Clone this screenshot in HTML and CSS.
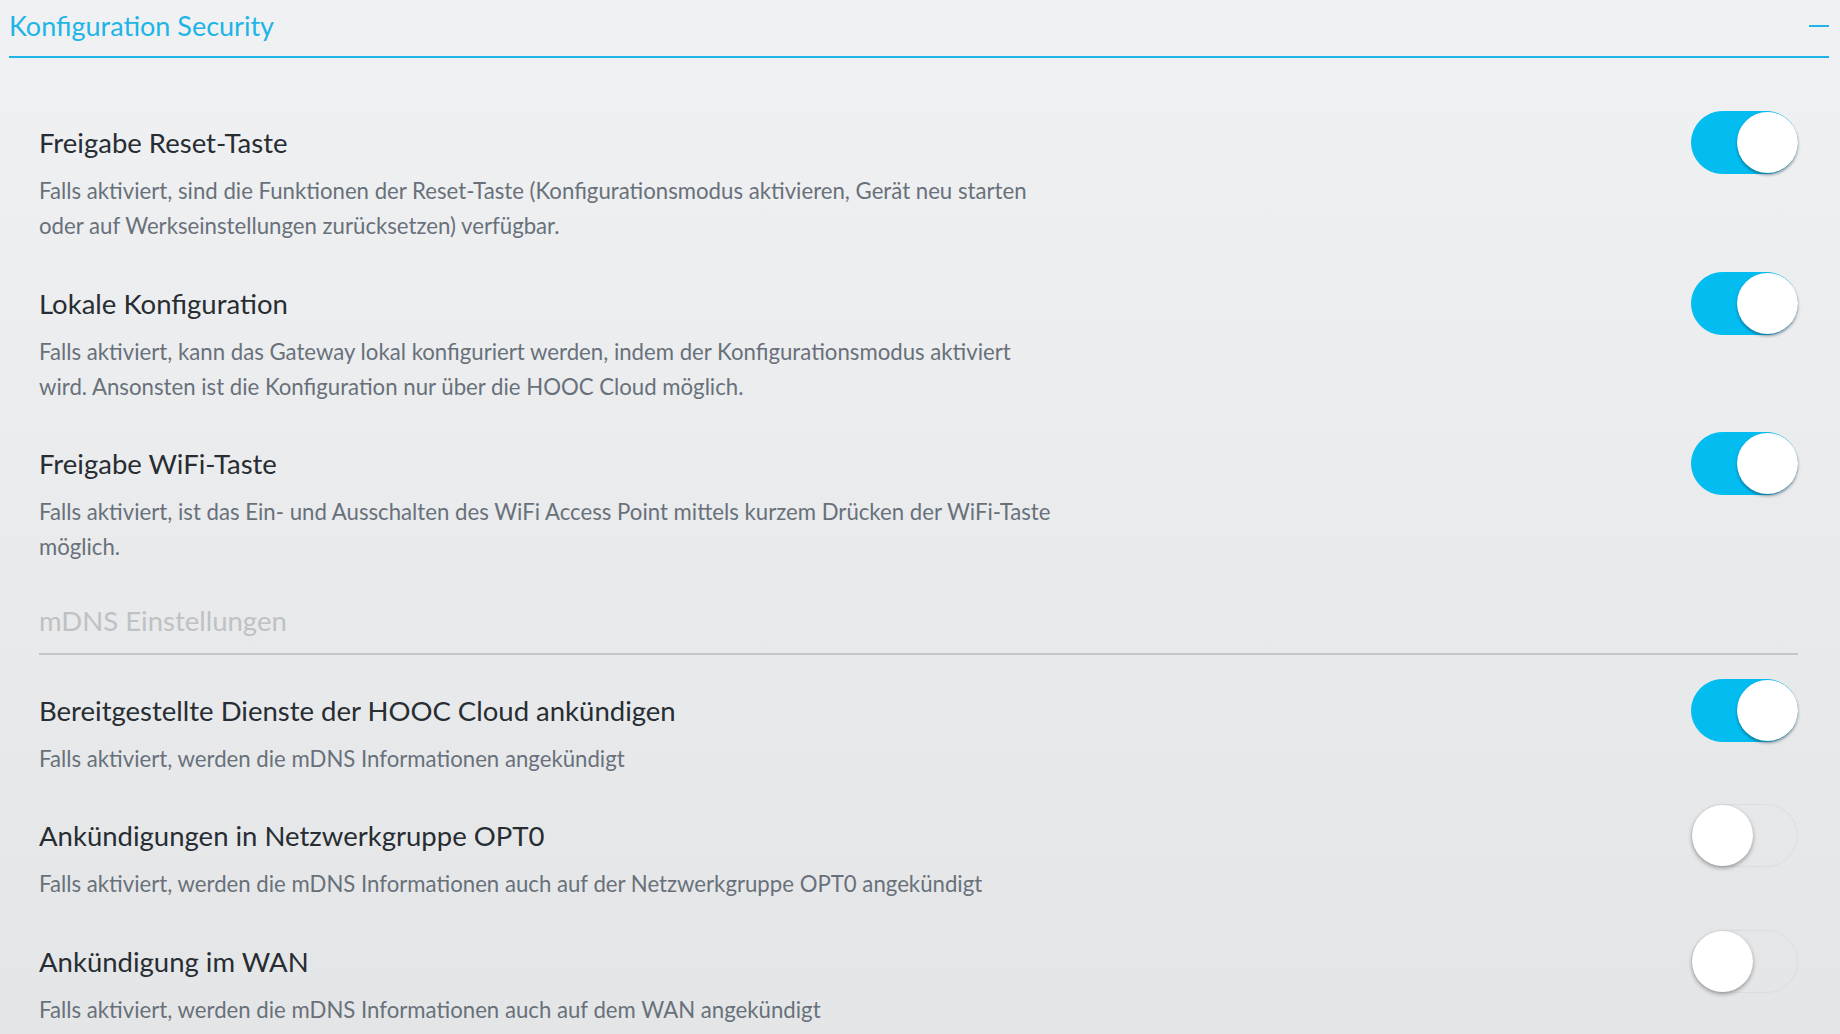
FILE: index.html
```html
<!DOCTYPE html>
<html lang="de">
<head>
<meta charset="utf-8">
<title>Konfiguration Security</title>
<link rel="stylesheet" href="styles.css">
</head>
<body>
<div class="panel">
  <div class="panel-header">
    <h1 class="panel-title">Konfiguration Security</h1>
    <span class="collapse-btn" aria-label="Einklappen"></span>
  </div>
  <div class="panel-body">
    <div class="setting">
      <div class="setting-text">
        <div class="setting-title">Freigabe Reset-Taste</div>
        <div class="setting-desc">Falls aktiviert, sind die Funktionen der Reset-Taste (Konfigurationsmodus aktivieren, Gerät neu starten oder auf Werkseinstellungen zurücksetzen) verfügbar.</div>
      </div>
      <span class="toggle on"><span class="knob"></span></span>
    </div>
    <div class="setting">
      <div class="setting-text">
        <div class="setting-title">Lokale Konfiguration</div>
        <div class="setting-desc">Falls aktiviert, kann das Gateway lokal konfiguriert werden, indem der Konfigurationsmodus aktiviert wird. Ansonsten ist die Konfiguration nur über die HOOC Cloud möglich.</div>
      </div>
      <span class="toggle on"><span class="knob"></span></span>
    </div>
    <div class="setting">
      <div class="setting-text">
        <div class="setting-title">Freigabe WiFi-Taste</div>
        <div class="setting-desc">Falls aktiviert, ist das Ein- und Ausschalten des WiFi Access Point mittels kurzem Drücken der WiFi-Taste möglich.</div>
      </div>
      <span class="toggle on"><span class="knob"></span></span>
    </div>

    <div class="section-heading">mDNS Einstellungen</div>

    <div class="setting">
      <div class="setting-text">
        <div class="setting-title">Bereitgestellte Dienste der HOOC Cloud ankündigen</div>
        <div class="setting-desc">Falls aktiviert, werden die mDNS Informationen angekündigt</div>
      </div>
      <span class="toggle on"><span class="knob"></span></span>
    </div>
    <div class="setting">
      <div class="setting-text">
        <div class="setting-title">Ankündigungen in Netzwerkgruppe OPT0</div>
        <div class="setting-desc">Falls aktiviert, werden die mDNS Informationen auch auf der Netzwerkgruppe OPT0 angekündigt</div>
      </div>
      <span class="toggle"><span class="knob"></span></span>
    </div>
    <div class="setting">
      <div class="setting-text">
        <div class="setting-title">Ankündigung im WAN</div>
        <div class="setting-desc">Falls aktiviert, werden die mDNS Informationen auch auf dem WAN angekündigt</div>
      </div>
      <span class="toggle"><span class="knob"></span></span>
    </div>
  </div>
</div>
</body>
</html>
```
FILE: styles.css
```css
html, body {
  margin: 0;
  padding: 0;
}
body {
  width: 1840px;
  height: 1034px;
  overflow: hidden;
  background: linear-gradient(to bottom, #f0f1f3 0%, #e4e5e7 100%);
  font-family: Lato, "Open Sans", "DejaVu Sans", sans-serif;
  color: #2d3338;
}
.panel {
  padding: 0 11px 0 9px;
}
.panel-header {
  display: flex;
  align-items: center;
  justify-content: space-between;
  height: 56px;
  border-bottom: 2px solid #1db5e6;
}
.panel-title {
  margin: 0 0 5px 0;
  font-weight: 400;
  font-size: 27px;
  line-height: 46px;
  color: #1db5e6;
}
.collapse-btn {
  width: 20px;
  height: 2px;
  background: #1db5e6;
  margin-bottom: 5px;
}
.panel-body {
  padding: 65px 31px 0 30px;
}
.setting {
  display: flex;
  align-items: flex-start;
  justify-content: space-between;
  margin-bottom: 40.5px;
}
.setting-text {
  flex: 1;
}
.setting-title {
  font-size: 27.5px;
  line-height: 40px;
  margin-bottom: 10px;
  color: #272d32;
}
.setting-desc {
  font-size: 22.2px;
  line-height: 35px;
  color: #68717a;
  max-width: 1020px;
}
.toggle {
  position: relative;
  flex: none;
  width: 107px;
  height: 63px;
  margin-top: -12px;
  box-sizing: border-box;
  border-radius: 32px;
  border: 1px solid #dcdde0;
  background: transparent;
}
.toggle.on {
  background: #03bdf1;
  border-color: #03bdf1;
}
.knob {
  position: absolute;
  top: 0;
  left: 0;
  width: 61px;
  height: 61px;
  border-radius: 50%;
  background: #fff;
  box-shadow: 0 2px 4px rgba(0, 0, 0, 0.35);
}
.toggle.on .knob {
  left: auto;
  right: -1px;
  box-shadow: 0 2px 3px rgba(0, 40, 60, 0.45);
}
.section-heading {
  font-size: 27.5px;
  line-height: 40px;
  color: #bfc1c4;
  padding-bottom: 12px;
  border-bottom: 2px solid #c4c6c8;
  margin-top: -4px;
  margin-bottom: 36px;
}
```
